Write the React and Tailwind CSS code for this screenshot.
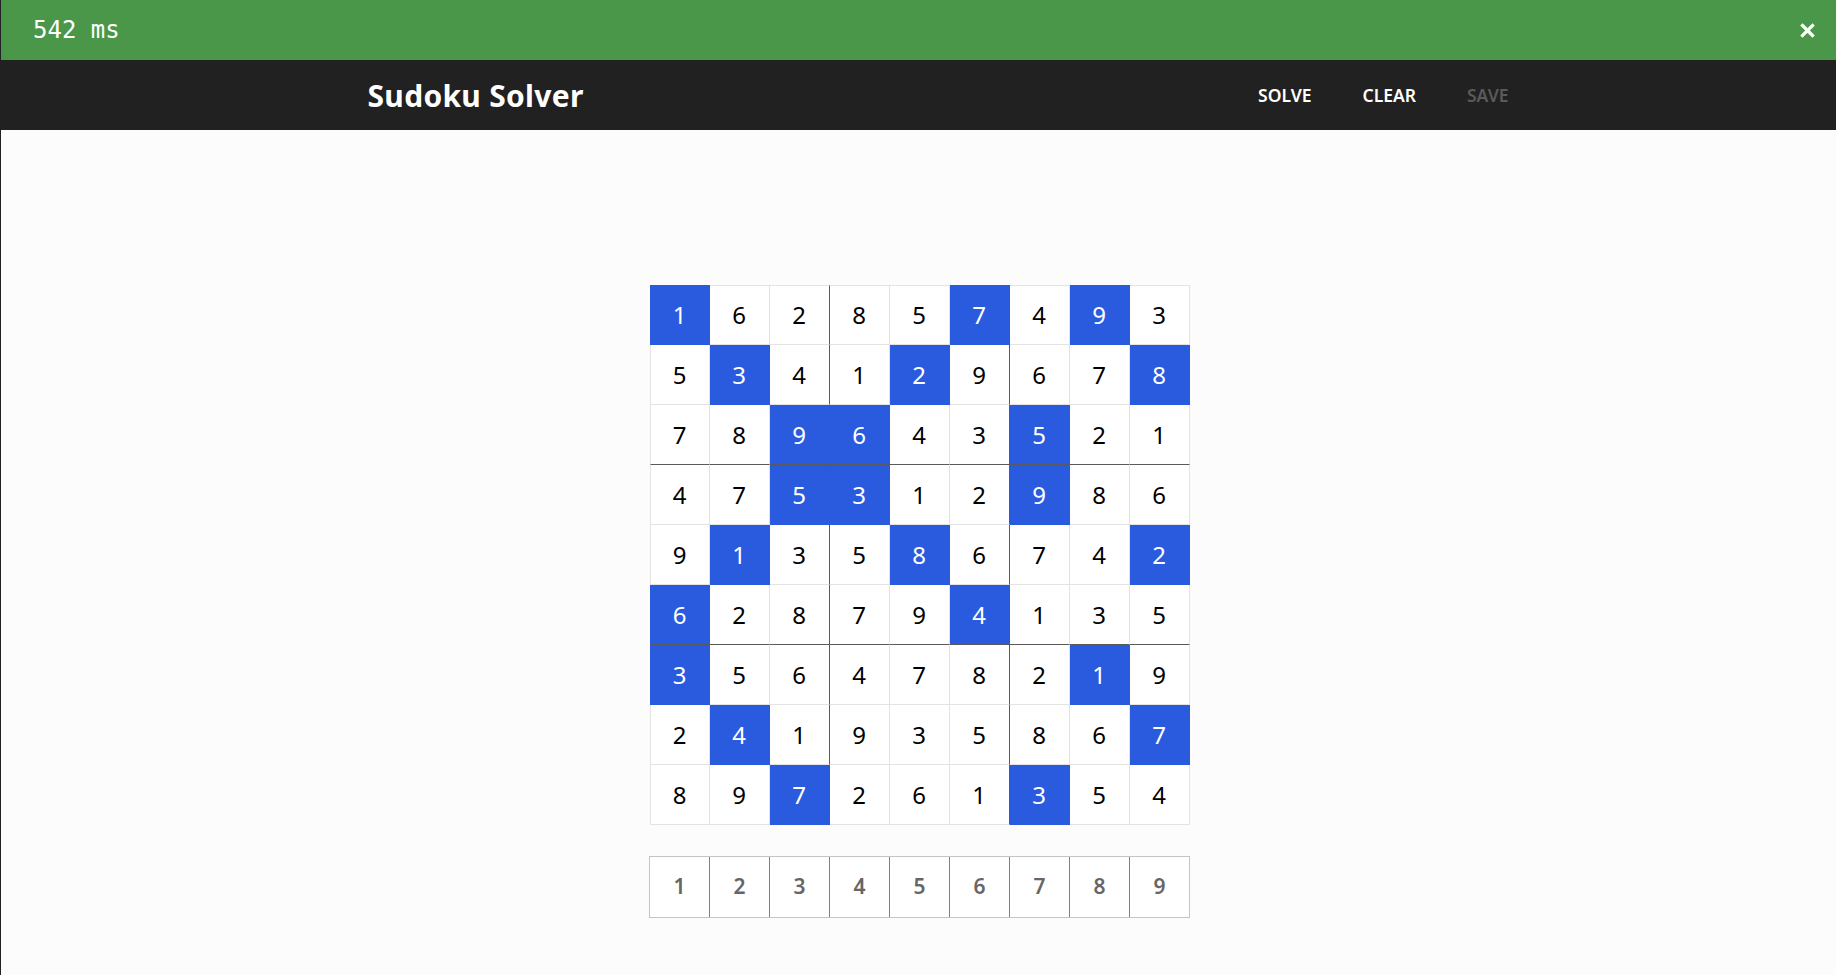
import React from "react";

const GRID = [
  "162857493",
  "534129678",
  "789643521",
  "475312986",
  "913586742",
  "628794135",
  "356478219",
  "241935867",
  "897261354",
];

const BLUE = [
  [0, 5, 7],
  [1, 4, 8],
  [2, 3, 6],
  [2, 3, 6],
  [1, 4, 8],
  [0, 5],
  [0, 7],
  [1, 8],
  [2, 6],
];

function Cell({ r, c, v }) {
  const blue = BLUE[r].includes(c);
  const darkR = c === 2 || c === 5;
  const darkB = r === 2 || r === 5;
  const base = blue ? "border-[#2a5bdf]" : "border-[#e3e3e3]";
  const rCls = darkR
    ? "border-r-[#5a5a5a]"
    : blue
    ? "border-r-[#2a5bdf]"
    : "border-r-[#e3e3e3]";
  const bCls = darkB
    ? "border-b-[#5a5a5a]"
    : blue
    ? "border-b-[#2a5bdf]"
    : "border-b-[#e3e3e3]";
  return (
    <div
      className={[
        "box-border w-[60px] h-[60px] flex items-center justify-center text-[24px] border-r border-b",
        r === 0 ? "border-t" : "",
        c === 0 ? "border-l" : "",
        base,
        rCls,
        bCls,
        blue ? "bg-[#2a5bdf] text-white" : "bg-white text-black",
      ].join(" ")}
    >
      {v}
    </div>
  );
}

export default function App() {
  return (
    <div
      className="min-h-[975px] bg-[#fcfcfc] border-l border-[#202124] box-border"
      style={{ fontFamily: '"Noto Sans", "Open Sans", sans-serif' }}
    >
      <div className="h-[60px] bg-[#4a974a] flex items-center justify-between pl-[32px] pr-[21px]">
        <span
          className="text-[24px] text-white leading-none"
          style={{ fontFamily: '"DejaVu Sans Mono", monospace' }}
        >
          542 ms
        </span>
        <svg width="15" height="15" viewBox="0 0 15 15" className="block">
          <path
            d="M2.5 2.5 L12.5 12.5 M12.5 2.5 L2.5 12.5"
            stroke="white"
            strokeWidth="3.2"
            strokeLinecap="square"
          />
        </svg>
      </div>
      <div className="h-[70px] bg-[#212121]">
        <div className="mx-auto w-[1180px] h-full flex items-center justify-between pl-[39px]">
          <div className="text-[30px] font-bold text-white tracking-[0.3px]">
            Sudoku Solver
          </div>
          <div className="flex items-center gap-[51px] text-[17.5px] font-semibold">
            <span className="text-white">SOLVE</span>
            <span className="text-white">CLEAR</span>
            <span className="text-[#5a5a5a]">SAVE</span>
          </div>
        </div>
      </div>
      <div className="flex flex-col items-center pt-[155px] pl-[2px]">
        <div className="grid grid-cols-9 w-[540px]">
          {GRID.map((row, r) =>
            row.split("").map((v, c) => <Cell key={r + "-" + c} r={r} c={c} v={v} />)
          )}
        </div>
        <div className="mt-[31px] flex border-t border-b border-l border-[#c4c4c4]">
          {[1, 2, 3, 4, 5, 6, 7, 8, 9].map((n) => (
            <div
              key={n}
              className={
                "box-border w-[60px] h-[60px] flex items-center justify-center text-[21px] font-semibold text-[#666666] bg-white border-r " +
                (n === 9 ? "border-[#c4c4c4]" : "border-[#808080]")
              }
            >
              {n}
            </div>
          ))}
        </div>
      </div>
    </div>
  );
}
